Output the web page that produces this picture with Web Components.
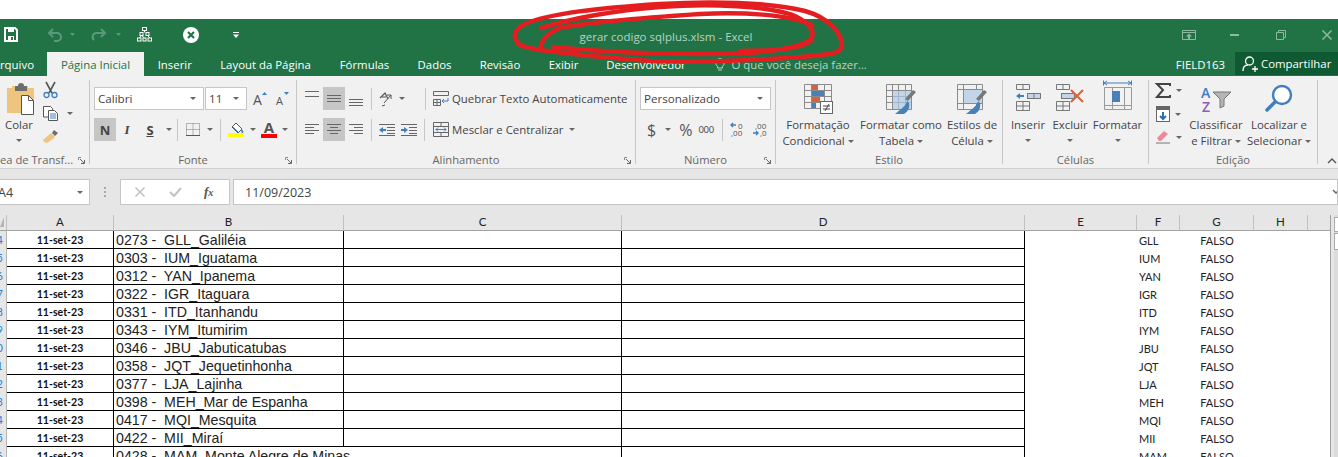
<!DOCTYPE html>
<html lang="pt">
<head>
<meta charset="utf-8">
<title>gerar codigo sqlplus.xlsm - Excel</title>
<style>
  html, body { margin: 0; height: 457px; overflow: hidden; background: #fff; font-family: "Open Sans", "Noto Sans", sans-serif; }
  svg { display: block; overflow: visible; }
  .row { display: flex; align-items: center; height: 23px; }
  .stack { display: flex; flex-direction: column; }
  .txt { font-size: 11.4px; color: #444; white-space: nowrap; }
</style>
</head>
<body>

<excel-titlebar title-text="gerar codigo sqlplus.xlsm - Excel">
  <svg slot="left" width="14" height="15" viewBox="0 0 14 15" style="margin-left:4px"><path d="M1 1h10l2 2v11H1z" fill="none" stroke="#fff" stroke-width="2"/><rect x="4" y="1" width="6" height="4" fill="#fff"/><rect x="4" y="9" width="6" height="5" fill="#fff"/><rect x="7" y="10" width="2" height="3" fill="#217346"/></svg>
  <svg slot="left" width="16" height="14" viewBox="0 0 16 14" style="margin-left:29px"><path d="M6 1L2 5l4 4M2 5h8a4 4 0 0 1 0 8H7" fill="none" stroke="#5b9a79" stroke-width="2"/></svg>
  <svg slot="left" width="5" height="3" viewBox="0 0 5 3" style="margin-left:7px"><path d="M0 0h5L2.500 3z" fill="#5b9a79"/></svg>
  <svg slot="left" width="15" height="13" viewBox="0 0 15 13" style="margin-left:17px"><path d="M9 1l4 4-4 4M13 5H5a4 4 0 0 0-3 7" fill="none" stroke="#5b9a79" stroke-width="2"/></svg>
  <svg slot="left" width="5" height="3" viewBox="0 0 5 3" style="margin-left:9px"><path d="M0 0h5L2.500 3z" fill="#5b9a79"/></svg>
  <svg slot="left" width="15" height="15" viewBox="0 0 15 15" style="margin-left:16px"><g fill="none" stroke="#fff"><rect x="5.500" y="0.500" width="4" height="3"/><rect x="3" y="5.500" width="3" height="3"/><rect x="9" y="5.500" width="3" height="3"/><rect x="0.500" y="11" width="3.500" height="3"/><rect x="6" y="11" width="3" height="3"/><rect x="11" y="11" width="3.500" height="3"/><path d="M7.500 3.500v2M4.500 8.500L2.500 11M4.500 8.500l3 2.500M10.500 8.500L13 11"/></g></svg>
  <svg slot="left" width="16" height="16" viewBox="0 0 16 16" style="margin-left:31px"><circle cx="8" cy="8" r="8" fill="#fff"/><path d="M5 5l6 6M11 5l-6 6" stroke="#217346" stroke-width="2.200"/></svg>
  <svg slot="left" width="6" height="6" viewBox="0 0 6 6" style="margin-left:34px"><path d="M0 0h6v1H0zM0 2.500h6L3 6z" fill="#fff"/></svg>

  <svg slot="right" width="14" height="10" viewBox="0 0 14 10" style="margin-left:0"><path d="M.5.500h13v9H.5zM.5 2.500h13" fill="none" stroke="#8fb8a2"/><path d="M7 3.500l3 3H8v2.500H6V6.500H4z" fill="#8fb8a2"/></svg>
  <svg slot="right" width="9" height="2" viewBox="0 0 9 2" style="margin-left:34px"><rect width="9" height="2" fill="#8fb8a2"/></svg>
  <svg slot="right" width="10" height="10" viewBox="0 0 10 10" style="margin-left:37px"><path d="M.5 2.500h7v7h-7zM2.500 2.500v-2h7v7h-2" fill="none" stroke="#8fb8a2"/></svg>
  <svg slot="right" width="10" height="10" viewBox="0 0 10 10" style="margin-left:36px"><path d="M.5.500l9 9M9.500.500l-9 9" stroke="#8fb8a2" stroke-width="1.500"/></svg>
</excel-titlebar>

<excel-tabs></excel-tabs>

<excel-ribbon>
  <!-- Area de transferencia -->
  <ribbon-group label="Área de Transf..." width="90" launcher="1" clip-label="1">
    <div class="row" style="height:71px;align-items:flex-start">
      <big-button width="38" label="Colar" caret="1">
        <svg width="30" height="31" viewBox="0 0 30 31" style="margin:4px 0 0 4px"><path d="M1 4h5V2h16v2h5a1 1 0 0 1 1 1v24H1z" fill="#edc57e"/><path d="M12 2a3 3 0 0 1 6 0h3v5H9V2z" fill="#6d6d6d"/><path d="M15.500 11.500h7l5 5v14h-12z" fill="#fff" stroke="#555"/><path d="M22.500 11.500v5h5" fill="none" stroke="#555"/></svg>
      </big-button>
      <div class="stack" style="gap:8px;padding-top:2px;margin-left:5px">
        <svg width="15" height="16" viewBox="0 0 15 16"><path d="M3 0l6 11M12 0L6 11" stroke="#555" stroke-width="1.600"/><circle cx="3.500" cy="13" r="2.500" fill="none" stroke="#3f7fbf" stroke-width="1.300"/><circle cx="11.500" cy="13" r="2.500" fill="none" stroke="#3f7fbf" stroke-width="1.300"/></svg>
        <div class="row" style="height:15px">
          <svg width="16" height="15" viewBox="0 0 16 15"><path d="M.5.500h7l2 2V11H.5z" fill="#fff" stroke="#555"/><path d="M5.500 4.500h6l3 3v7h-9z" fill="#fff" stroke="#555"/><path d="M7 8h6M7 10h6M7 12h6" stroke="#3f7fbf"/></svg>
          <drop-caret style="margin-left:8px"></drop-caret>
        </div>
        <svg width="17" height="15" viewBox="0 0 17 15" style="margin-left:0"><path d="M11 1l4 3-3 3-3-3z" fill="#6d6d6d"/><path d="M8 4l4 4-2 2-6 4-3-1-1-2z" fill="#edc57e"/></svg>
      </div>
    </div>
  </ribbon-group>

  <!-- Fonte -->
  <ribbon-group label="Fonte" width="207" launcher="1" pad-left="4">
    <div class="row">
      <font-combo width="110" value="Calibri"></font-combo>
      <font-combo width="42" value="11" style="margin-left:1px"></font-combo>
      <tool-button width="14" style="margin-left:6px"><svg width="14" height="14" viewBox="0 0 14 14"><text x="0" y="13" font-size="14" font-family="Open Sans" fill="#555">A</text><path d="M9 3l2.500-3L14 3z" fill="#3f7fbf"/></svg></tool-button>
      <tool-button width="13" style="margin-left:9px"><svg width="13" height="13" viewBox="0 0 13 13"><text x="0" y="13" font-size="11" font-family="Open Sans" fill="#555">A</text><path d="M8 0h5l-2.500 3z" fill="#3f7fbf"/></svg></tool-button>
    </div>
    <div class="row" style="margin-top:8px">
      <tool-button width="22" active="1"><b style="font:bold 13px 'Open Sans';color:#444">N</b></tool-button>
      <tool-button width="22" style="margin-left:0"><i style="font:italic bold 13px 'Liberation Serif';color:#444">I</i></tool-button>
      <tool-button width="22" style="margin-left:1px"><b style="font:bold 13px 'Open Sans';color:#444;text-decoration:underline">S</b></tool-button>
      <drop-caret style="margin-left:5px"></drop-caret>
      <tool-sep style="margin-left:5px"></tool-sep>
      <svg width="14" height="13" viewBox="0 0 14 13" style="margin-left:8px"><path d="M.5.500h13v12H.5zM.5 6.500h13M7 .500v12" fill="none" stroke="#777" stroke-dasharray="1 1"/><path d="M0 12.500h14" stroke="#555"/></svg>
      <drop-caret style="margin-left:7px"></drop-caret>
      <tool-sep style="margin-left:7px"></tool-sep>
      <svg width="17" height="15" viewBox="0 0 17 15" style="margin-left:7px"><path d="M8 1l6 6-4 4-6-6z" fill="#fff" stroke="#555"/><path d="M13 7c2 1 3 3 2 4s-2-1-2-4z" fill="#3f7fbf"/><path d="M5 5l6 6" stroke="#3f7fbf"/><rect x="0" y="11" width="16" height="4" fill="#ffff00"/></svg>
      <drop-caret style="margin-left:5px"></drop-caret>
      <div class="stack" style="margin-left:5px;width:16px;align-items:center;height:16px;justify-content:space-between">
        <span style="font:bold 15px/11px 'Open Sans';color:#555;height:11px">A</span>
        <span style="display:block;width:16px;height:4px;background:#f00"></span>
      </div>
      <drop-caret style="margin-left:5px"></drop-caret>
    </div>
  </ribbon-group>

  <!-- Alinhamento -->
  <ribbon-group label="Alinhamento" width="339" launcher="1" pad-left="4">
    <div class="row">
      <tool-button width="22"><svg width="14" height="18" viewBox="0 0 14 18"><path d="M0 1.500h14M0 6.500h14" stroke="#666"/></svg></tool-button>
      <tool-button width="22" active="1"><svg width="14" height="9" viewBox="0 0 14 9"><path d="M0 1.500h14M0 4.500h14M0 7.500h14" stroke="#666"/></svg></tool-button>
      <tool-button width="22"><svg width="14" height="18" viewBox="0 0 14 18"><path d="M0 9.500h14M0 12.500h14M0 15.500h14" stroke="#666"/></svg></tool-button>
      <tool-sep style="margin-left:4px"></tool-sep>
      <svg width="16" height="16" viewBox="0 0 16 16" style="margin-left:7px"><path d="M1 7l5-5 3 6M3 6l4 0" fill="none" stroke="#555" stroke-width="1.200"/><path d="M5 12l7-8M12 4v4M12 4H8M3 15l3-1" fill="none" stroke="#555"/></svg>
      <drop-caret style="margin-left:4px"></drop-caret>
      <tool-sep style="margin-left:20px"></tool-sep>
      <svg width="16" height="15" viewBox="0 0 16 15" style="margin-left:7px"><path d="M.5 .5h15v4H.5zM.5 8.500h7v6h-7zM.5 11.500h7M4 8.500v6" fill="none" stroke="#666"/><path d="M15 7v3H9m2-2l-2 2 2 2" fill="none" stroke="#3f7fbf"/></svg>
      <span class="txt" style="margin-left:3px">Quebrar Texto Automaticamente</span>
    </div>
    <div class="row" style="margin-top:8px">
      <tool-button width="22"><svg width="14" height="11" viewBox="0 0 14 11"><path d="M0 .5h14M0 3.500h9M0 6.500h14M0 9.500h9" stroke="#666"/></svg></tool-button>
      <tool-button width="22" active="1"><svg width="14" height="11" viewBox="0 0 14 11"><path d="M0 .5h14M3 3.500h8M0 6.500h14M3 9.500h8" stroke="#666"/></svg></tool-button>
      <tool-button width="22"><svg width="14" height="11" viewBox="0 0 14 11"><path d="M0 .5h14M5 3.500h9M0 6.500h14M5 9.500h9" stroke="#666"/></svg></tool-button>
      <tool-sep style="margin-left:4px"></tool-sep>
      <svg width="16" height="12" viewBox="0 0 16 12" style="margin-left:7px"><path d="M0 .5h16M8 3.500h8M8 6.500h8M0 11.500h16M8 9.500h8" stroke="#666" stroke-width="1"/><path d="M0 6l4-3v2h3v2H4v2z" fill="#3f7fbf"/></svg>
      <svg width="16" height="12" viewBox="0 0 16 12" style="margin-left:6px"><path d="M0 .5h16M8 3.500h8M8 6.500h8M0 11.500h16M8 9.500h8" stroke="#666"/><path d="M7 6L3 3v2H0v2h3v2z" fill="#3f7fbf"/></svg>
      <tool-sep style="margin-left:7px"></tool-sep>
      <svg width="16" height="15" viewBox="0 0 16 15" style="margin-left:8px"><path d="M.5.500h15v14H.5zM.5 4.500h15M.5 10.500h15M8 .500v4M8 10.500v4" fill="none" stroke="#666"/><path d="M3 7.500h10M3 7.500l2-2M3 7.500l2 2M13 7.500l-2-2M13 7.500l-2 2" fill="none" stroke="#3f7fbf"/></svg>
      <span class="txt" style="margin-left:3px">Mesclar e Centralizar</span>
      <drop-caret style="margin-left:6px"></drop-caret>
    </div>
  </ribbon-group>

  <!-- Numero -->
  <ribbon-group label="Número" width="140" launcher="1" pad-left="4">
    <div class="row"><font-combo width="131" value="Personalizado"></font-combo></div>
    <div class="row" style="margin-top:8px">
      <span style="font:16px 'Open Sans';color:#555;margin-left:7px">$</span>
      <drop-caret style="margin-left:9px"></drop-caret>
      <span style="font:16px 'Open Sans';color:#555;margin-left:8px">%</span>
      <span style="font:9.500px 'Open Sans';color:#444;margin-left:6px;letter-spacing:-.2px">000</span>
      <tool-sep style="margin-left:8px"></tool-sep>
      <svg width="15" height="15" viewBox="0 0 15 15" style="margin-left:7px"><path d="M6 3H1m2-2L1 3l2 2" fill="none" stroke="#3f7fbf" stroke-width="1.400"/><text x="8" y="7" font-size="8" font-family="Open Sans" fill="#555">0</text><text x="1" y="14" font-size="8" font-family="Open Sans" fill="#555">,00</text></svg>
      <svg width="15" height="15" viewBox="0 0 15 15" style="margin-left:7px"><text x="3" y="7" font-size="8" font-family="Open Sans" fill="#555">,00</text><path d="M1 11h5m-2-2l2 2-2 2" fill="none" stroke="#3f7fbf" stroke-width="1.400"/><text x="8" y="14" font-size="8" font-family="Open Sans" fill="#555">,0</text></svg>
    </div>
  </ribbon-group>

  <!-- Estilo -->
  <ribbon-group label="Estilo" width="227">
    <div class="row" style="height:71px;align-items:flex-start">
      <big-button width="84" lines="Formatação|Condicional" line-caret="1">
        <svg width="29" height="31" viewBox="0 0 29 31" style="margin-top:4px"><path d="M.5.500h27v24H.5zM.5 6.500h27M.5 12.500h27M.5 18.500h27M7.500.500v24M20.500.500v24" fill="none" stroke="#8b8b8b"/><rect x="8" y="1" width="6" height="5" fill="#d9613b"/><rect x="8" y="7" width="12" height="5" fill="#4a80b8"/><rect x="8" y="13" width="8" height="5" fill="#d9613b"/><rect x="8" y="19" width="4" height="5" fill="#4a80b8"/><rect x="16.500" y="17.500" width="12" height="12" fill="#fff" stroke="#666"/><path d="M19 22h7M19 25h7M25 20l-4 7" stroke="#444"/></svg>
      </big-button>
      <big-button width="82" lines="Formatar como|Tabela" line-caret="1">
        <svg width="30" height="31" viewBox="0 0 30 31" style="margin-top:4px"><path d="M.5.500h25v25H.5zM.5 6.500h25M.5 12.500h25M.5 18.500h25M6.500.500v25M12.500.500v25M19.500.500v25" fill="none" stroke="#8b8b8b"/><rect x="7" y="7" width="18" height="18" fill="#c2d5e8"/><path d="M7 12.500h18M7 18.500h18M12.500 7v18M19.500 7v18" stroke="#9fb6cc"/><path d="M30 8l-8 9-3-2 8-9z" fill="#777"/><path d="M21 17c-1 5-6 8-12 13h9c4-2 6-7 5-11z" fill="#4a80b8"/></svg>
      </big-button>
      <big-button width="60" lines="Estilos de|Célula" line-caret="1">
        <svg width="30" height="31" viewBox="0 0 30 31" style="margin-top:4px"><path d="M.5.500h25v25H.5zM.5 5.500h25M6.500.500v25M19.500.500v25M.5 19.500h25" fill="none" stroke="#8b8b8b"/><rect x="7" y="6" width="18" height="13" fill="#c2d5e8"/><path d="M30 8l-8 9-3-2 8-9z" fill="#777"/><path d="M21 17c-1 5-6 8-12 13h9c4-2 6-7 5-11z" fill="#4a80b8"/></svg>
      </big-button>
    </div>
  </ribbon-group>

  <!-- Celulas -->
  <ribbon-group label="Células" width="146">
    <div class="row" style="height:71px;align-items:flex-start">
      <big-button width="50" label="Inserir" caret="1">
        <svg width="26" height="27" viewBox="0 0 26 27" style="margin:4px 0 0 0"><path d="M1.500 .5h13v5h-13zM8 .5v5M1.500 17.500h13v9h-13zM1.500 22h13M8 17.500v9" fill="none" stroke="#777"/><rect x="12.500" y="9.500" width="13" height="5" fill="#c2d5e8" stroke="#777"/><path d="M19 9.500v5" stroke="#777"/><path d="M1 12l4-3v2h4v2H5v2z" fill="#3f7fbf"/></svg>
      </big-button>
      <big-button width="34" label="Excluir" caret="1">
        <svg width="30" height="27" viewBox="0 0 30 27" style="margin:4px 0 0 0"><path d="M1.500 .5h13v5h-13zM8 .5v5M1.500 17.500h13v9h-13zM1.500 22h13M8 17.500v9" fill="none" stroke="#777"/><rect x="6.500" y="9.500" width="13" height="5" fill="#c2d5e8" stroke="#777"/><path d="M16 6l12 12M28 6L16 18" stroke="#d9613b" stroke-width="2"/></svg>
      </big-button>
      <big-button width="61" label="Formatar" caret="1" style="margin-left:0">
        <svg width="29" height="33" viewBox="0 0 29 33" style="margin:0"><path d="M1 3h27M1 3l3-2M1 3l3 2M28 3l-3-2M28 3l-3 2M.5.500v5M28.500.500v5" fill="none" stroke="#3f7fbf"/><path d="M1.500 7.500h27v22h-27zM1.500 25.500h27M9.500 7.500v22M21.500 7.500v22" fill="none" stroke="#999"/><rect x="9" y="11" width="8" height="11" fill="#4a80b8"/></svg>
      </big-button>
    </div>
  </ribbon-group>

  <!-- Edicao -->
  <ribbon-group label="Edição" width="169">
    <div class="row" style="height:71px;align-items:flex-start">
      <div class="stack" style="gap:8px;padding:3px 0 0 7px;width:36px;box-sizing:border-box;flex:none">
        <div class="row" style="height:15px">
          <svg width="15" height="15" viewBox="0 0 15 15"><path d="M14 3V1H1l6 6-6 7h13v-2" fill="none" stroke="#444" stroke-width="2"/></svg>
          <drop-caret style="margin-left:5px"></drop-caret>
        </div>
        <div class="row" style="height:16px">
          <svg width="14" height="16" viewBox="0 0 14 16"><rect x=".5" y=".5" width="13" height="15" fill="#fff" stroke="#666"/><rect width="14" height="4" fill="#666"/><path d="M7 6v7M4 10l3 3 3-3" fill="none" stroke="#2a6db5" stroke-width="2"/></svg>
          <drop-caret style="margin-left:5px"></drop-caret>
        </div>
        <div class="row" style="height:14px">
          <svg width="14" height="14" viewBox="0 0 14 14"><path d="M1 8l7-7 4 3-7 7H3z" fill="#ec8a9c"/><path d="M0 13h14" stroke="#777"/></svg>
          <drop-caret style="margin-left:6px"></drop-caret>
        </div>
      </div>
      <big-button width="62" lines="Classificar|e Filtrar" line-caret="1">
        <svg width="31" height="27" viewBox="0 0 31 27" style="margin-top:5px"><text x="0" y="13" font-size="14" font-family="Open Sans" font-weight="600" fill="#3f7fbf">A</text><text x="1" y="27" font-size="14" font-family="Open Sans" font-weight="600" fill="#8c5fb5">Z</text><path d="M12 7h18l-7 7v7l-4 2v-9z" fill="#b5b5b5" stroke="#777"/></svg>
      </big-button>
      <big-button width="64" lines="Localizar e|Selecionar" line-caret="1">
        <svg width="28" height="28" viewBox="0 0 28 28" style="margin-top:4px"><circle cx="17" cy="11" r="9" fill="#fff" stroke="#3f7fbf" stroke-width="2.400"/><path d="M10 18L2 26" stroke="#3f7fbf" stroke-width="3.500" stroke-linecap="round"/></svg>
      </big-button>
    </div>
  </ribbon-group>
</excel-ribbon>

<excel-formula name-box="A4" value="11/09/2023"></excel-formula>
<excel-sheet></excel-sheet>
<red-scribble></red-scribble>

<script>
class ExcelTitlebar extends HTMLElement {
  constructor() {
    super();
    this.attachShadow({mode: 'open'});
    this.shadowRoot.innerHTML = `
      <style>
        :host { display: grid; grid-template-columns: 555px 220px 1fr; height: 33px; margin-top: 19px; background: #217346; align-items: center; }
        .side { display: flex; align-items: center; padding-bottom: 2px; }
        .title { font-size: 11.5px; color: #b7d3c3; text-align: center; white-space: nowrap; padding-top: 2px; transform: translateX(1px); }
        .right { padding-left: 407px; }
      </style>
      <div class="side"><slot name="left"></slot></div>
      <div class="title"></div>
      <div class="side right"><slot name="right"></slot></div>`;
    this.shadowRoot.querySelector('.title').textContent = this.getAttribute('title-text');
  }
}

const TABS = [['Arquivo', 47], ['Página Inicial', 97, true], ['Inserir', 61.5], ['Layout da Página', 120], ['Fórmulas', 78], ['Dados', 62], ['Revisão', 69], ['Exibir', 58], ['Desenvolvedor', 107]];

class ExcelTabs extends HTMLElement {
  constructor() {
    super();
    this.attachShadow({mode: 'open'});
    this.shadowRoot.innerHTML = `
      <style>
        :host { display: flex; height: 24px; background: #217346; font-size: 11.4px; color: #fff; white-space: nowrap; }
        .tab { display: flex; align-items: center; justify-content: center; flex: none; padding-top: 1px; box-sizing: border-box; }
        .tab.first { justify-content: flex-end; padding-right: 13px; }
        .tab.on { background: #f1f1f1; color: #217346; }
        .tell { display: flex; align-items: center; gap: 7px; margin-left: 15px; color: #b7d3c3; flex: none; width: 450px; }
        .user { margin-left: auto; display: flex; align-items: center; padding-right: 10px; }
        .share { display: flex; align-items: center; gap: 3px; width: 103px; height: 23px; padding-left: 7px; box-sizing: border-box; background: #0f5a32; flex: none; }
      </style>
      <div class="tabs" style="display:contents"></div>
      <div class="tell">
        <svg width="10" height="13" viewBox="0 0 10 13"><path d="M5 .5a4.500 4.500 0 0 1 2.500 8V10h-5V8.500A4.500 4.500 0 0 1 5 .5zM3 12h4" fill="none" stroke="#b7d3c3"/></svg>
        <span>O que você deseja fazer...</span>
      </div>
      <div class="user">FIELD163</div>
      <div class="share">
        <svg width="16" height="16" viewBox="0 0 16 16"><circle cx="7.500" cy="5" r="4" fill="none" stroke="#fff" stroke-width="1.300"/><path d="M1 15c0-4 2-6 5-6M10 13h6M13 10v6" fill="none" stroke="#fff" stroke-width="1.300"/></svg>
        <span>Compartilhar</span>
      </div>`;
    const box = this.shadowRoot.querySelector('.tabs');
    TABS.forEach(([name, w, on], i) => {
      const t = document.createElement('div');
      t.className = 'tab' + (on ? ' on' : '') + (i === 0 ? ' first' : '');
      t.style.width = w + 'px';
      t.textContent = name;
      box.appendChild(t);
    });
  }
}

class ExcelRibbon extends HTMLElement {
  constructor() {
    super();
    this.attachShadow({mode: 'open'});
    this.shadowRoot.innerHTML = `
      <style>
        :host { display: flex; height: 93px; padding-top: 4px; box-sizing: border-box; background: #f1f1f1; border-bottom: 1px solid #d2d2d2; position: relative; }
        .up { margin: 78px 0 0 9px; }
      </style>
      <slot></slot>
      <svg class="up" width="10" height="6" viewBox="0 0 10 6"><path d="M1 5l4-4 4 4" fill="none" stroke="#555" stroke-width="1.400"/></svg>`;
  }
}

class RibbonGroup extends HTMLElement {
  constructor() {
    super();
    this.attachShadow({mode: 'open'});
    const pad = this.getAttribute('pad-left');
    const launcher = this.hasAttribute('launcher');
    this.shadowRoot.innerHTML = `
      <style>
        :host { display: flex; flex-direction: column; flex: none; height: 84px; box-sizing: border-box; border-right: 1px solid #c6c6c6; width: ${this.getAttribute('width')}px; }
        .body { flex: none; height: 71px; padding-top: ${pad ? 7 : 0}px; padding-left: ${pad || 0}px; box-sizing: border-box; }
        .foot { flex: none; position: relative; height: 17px; line-height: 17px; font-size: 11.2px; color: #666; text-align: center; white-space: nowrap; overflow: visible; }
        .foot svg { position: absolute; right: 4px; top: 6px; }
      </style>
      <div class="body"><slot></slot></div>
      <div class="foot"><span></span>${launcher ? '<svg width="7" height="7" viewBox="0 0 7 7"><path d="M.5 3V.5H3" fill="none" stroke="#888"/><path d="M2 2l4 4M6.500 3v3.500H3" fill="none" stroke="#666"/></svg>' : ''}</div>`;
    const label = this.shadowRoot.querySelector('.foot span');
    label.textContent = this.getAttribute('label');
    if (this.hasAttribute('clip-label')) {
      this.shadowRoot.querySelector('.foot').style.textAlign = 'left';
      label.textContent = 'ea de Transf...';
    }
  }
}

class BigButton extends HTMLElement {
  constructor() {
    super();
    this.attachShadow({mode: 'open'});
    const lines = (this.getAttribute('lines') || this.getAttribute('label')).split('|');
    const under = this.hasAttribute('caret') ? '<div class="c"><drop-caret></drop-caret></div>' : '';
    const textLines = lines.map((l, i) => `<div class="l">${l}${(i === lines.length - 1 && this.hasAttribute('line-caret')) ? '<drop-caret class="lc"></drop-caret>' : ''}</div>`).join('');
    this.shadowRoot.innerHTML = `
      <style>
        :host { display: flex; flex-direction: column; align-items: center; flex: none; width: ${this.getAttribute('width')}px; }
        .i { height: 37px; display: flex; justify-content: center; }
        .l { font-size: 11.4px; line-height: 16px; color: #444; white-space: nowrap; display: flex; align-items: center; }
        .lc { margin-left: 3px; }
        .c { height: 15px; display: flex; align-items: center; }
      </style>
      <div class="i"><slot></slot></div>
      ${textLines}${under}`;
  }
}

class ToolButton extends HTMLElement {
  constructor() {
    super();
    this.attachShadow({mode: 'open'});
    this.shadowRoot.innerHTML = `
      <style>
        :host { display: flex; align-items: center; justify-content: center; flex: none; height: 23px; width: ${this.getAttribute('width')}px; background: ${this.hasAttribute('active') ? '#c6c6c6' : 'transparent'}; }
      </style>
      <slot></slot>`;
  }
}

class ToolSep extends HTMLElement {
  constructor() {
    super();
    this.attachShadow({mode: 'open'});
    this.shadowRoot.innerHTML = `<style>:host { display: block; flex: none; width: 1px; height: 22px; background: #c6c6c6; }</style>`;
  }
}

class DropCaret extends HTMLElement {
  constructor() {
    super();
    this.attachShadow({mode: 'open'});
    this.shadowRoot.innerHTML = `<style>:host { display: block; flex: none; width: 0; height: 0; border: 3px solid transparent; border-top: 3px solid #666; border-bottom: 0; }</style>`;
  }
}

class FontCombo extends HTMLElement {
  constructor() {
    super();
    this.attachShadow({mode: 'open'});
    this.shadowRoot.innerHTML = `
      <style>
        :host { display: flex; align-items: center; justify-content: space-between; flex: none; box-sizing: border-box; height: 23px; width: ${this.getAttribute('width')}px; padding: 0 7px 0 3px; background: #fff; border: 1px solid #c6c6c6; font-size: 11.6px; color: #444; }
      </style>
      <span></span><drop-caret></drop-caret>`;
    this.shadowRoot.querySelector('span').textContent = this.getAttribute('value');
  }
}

class ExcelFormula extends HTMLElement {
  constructor() {
    super();
    this.attachShadow({mode: 'open'});
    this.shadowRoot.innerHTML = `
      <style>
        :host { display: flex; height: 46px; padding: 10px 0; box-sizing: border-box; background: #e6e6e6; font-size: 12.5px; color: #444; }
        .box { background: #fff; border: 1px solid #c6c6c6; box-sizing: border-box; height: 26px; display: flex; align-items: center; flex: none; }
        .name { width: 91px; margin-left: -1px; overflow: hidden; justify-content: space-between; padding-right: 6px; }
        .name span { margin-left: -2px; }
        .dots { width: 30px; display: flex; justify-content: center; align-items: center; flex: none; }
        .btns { width: 110px; }
        .val { margin-left: 3px; flex: 1; padding-left: 11px; justify-content: space-between; padding-right: 0; overflow: hidden; }
      </style>
      <div class="box name"><span></span><drop-caret></drop-caret></div>
      <div class="dots"><svg width="2" height="10" viewBox="0 0 2 10"><path d="M0 0h2v2H0zM0 4h2v2H0zM0 8h2v2H0z" fill="#aaa"/></svg></div>
      <div class="box btns">
        <svg width="10" height="10" viewBox="0 0 10 10" style="margin-left:14px"><path d="M.5.500l9 9M9.500.500l-9 9" stroke="#c2c2c2" stroke-width="1.500"/></svg>
        <svg width="13" height="10" viewBox="0 0 13 10" style="margin-left:24px"><path d="M1 5l4 4 7-8" fill="none" stroke="#c2c2c2" stroke-width="2"/></svg>
        <span style="margin-left:22px;font:italic bold 13px 'Liberation Serif';color:#555">f<span style="font-size:10px">x</span></span>
      </div>
      <div class="box val"><span class="v"></span><svg width="8" height="6" viewBox="0 0 8 6" style="margin-right:-3px"><path d="M1 1l3 3 3-3" fill="none" stroke="#666" stroke-width="1.500"/></svg></div>`;
    this.shadowRoot.querySelector('.name span').textContent = this.getAttribute('name-box');
    this.shadowRoot.querySelector('.v').textContent = this.getAttribute('value');
  }
}

const COLS = [['A', 107], ['B', 230], ['C', 278], ['D', 403], ['E', 112], ['F', 43], ['G', 74], ['H', 54]];
const ROWS = [
  ['0273', 'GLL', 'Galiléia'], ['0303', 'IUM', 'Iguatama'], ['0312', 'YAN', 'Ipanema'],
  ['0322', 'IGR', 'Itaguara'], ['0331', 'ITD', 'Itanhandu'], ['0343', 'IYM', 'Itumirim'],
  ['0346', 'JBU', 'Jabuticatubas'], ['0358', 'JQT', 'Jequetinhonha'], ['0377', 'LJA', 'Lajinha'],
  ['0398', 'MEH', 'Mar de Espanha'], ['0417', 'MQI', 'Mesquita'], ['0422', 'MII', 'Miraí'],
  ['0428', 'MAM', 'Monte Alegre de Minas']
];

class ExcelSheet extends HTMLElement {
  constructor() {
    super();
    this.attachShadow({mode: 'open'});
    const tracks = '7px ' + COLS.map(c => c[1] + 'px').join(' ') + ' 22px';
    let html = '<div class="h corner"><svg width="4" height="10" viewBox="0 0 4 10"><path d="M4 0v10H0z" fill="#b5b5b5"/></svg></div>';
    COLS.forEach(c => { html += `<div class="h">${c[0]}</div>`; });
    html += '<div class="h end"></div>';
    ROWS.forEach((r, i) => {
      const last = i === ROWS.length - 1;
      html += `<div class="rh">${i + 4}</div>`;
      html += '<div class="c a">11-set-23</div>';
      html += `<div class="c b${last ? ' open' : ''}">${r[0]} -  ${r[1]}_${r[2]}</div>`;
      html += '<div class="c"></div><div class="c"></div>';
      html += '<div class="e"></div>';
      html += `<div class="e f">${r[1]}</div><div class="e g">FALSO</div><div class="e"></div><div class="e"></div>`;
    });
    this.shadowRoot.innerHTML = `
      <style>
        :host { display: flex; background: #e6e6e6; }
        .grid { display: grid; grid-template-columns: ${tracks}; grid-auto-rows: 18px; grid-template-rows: 16px; flex: none; border-right: 1px solid #9f9f9f; }
        .h { background: #e6e6e6; border-bottom: 1px solid #a3a3a3; border-right: 1px solid #c0c0c0; box-sizing: border-box; font: 11.5px/14px "Lato", sans-serif; color: #222; text-align: center; }
        .corner { display: flex; align-items: center; padding-bottom: 1px; }
        .h.end { border-right: 0; }
        .rh { background: #e6e6e6; overflow: hidden; direction: rtl; font: 11px/18px "Lato", sans-serif; color: #2a7fd4; border-right: 1px solid #b5b5b5; box-sizing: border-box; padding-right: 3px; }
        .c, .e { background: #fff; box-sizing: border-box; white-space: pre; }
        .c { border-right: 1px solid #000; border-bottom: 1px solid #000; }
        .a { font: bold 10.6px/18px "Lato", sans-serif; color: #111; text-align: center; }
        .b { font: 14.2px/18px "Liberation Sans", sans-serif; color: #222; padding-left: 2px; }
        .b.open { border-right-color: transparent; overflow: visible; z-index: 1; }
        .e { font: 11px/20px "Lato", sans-serif; color: #222; }
        .f { padding-left: 2px; }
        .g { text-align: center; }
        .scroll { margin-left: 3px; flex: 1; background: #dcdcdc; display: flex; flex-direction: column; gap: 1px; align-items: stretch; padding-top: 2px; }
        .sb { box-sizing: border-box; border: 1px solid #ababab; border-right: 0; background: #fff; height: 15px; }
        .sb.t { height: 17px; background: #fff; }
      </style>
      <div class="grid">${html}</div>
      <div class="scroll"><div class="sb"></div><div class="sb t"></div></div>`;
  }
}

class RedScribble extends HTMLElement {
  constructor() {
    super();
    this.attachShadow({mode: 'open'});
    this.shadowRoot.innerHTML = `
      <style>
        :host { position: absolute; left: 0; top: 0; display: block; pointer-events: none; }
      </style>
      <svg width="1338" height="70" viewBox="0 0 1338 70" style="display:block">
        <g fill="none" stroke="#e41e20" stroke-width="4.500" stroke-linecap="round" stroke-linejoin="round">
          <path d="M520 45C512 38 513 30 525 24C550 13 600 8 660 4C710 1 770 2 805 11C830 18 842 34 842 46C842 54 825 55 800 57C760 60 700 63 650 61C610 58 570 54 540 50C530 48 524 47 520 45"/>
          <path d="M541 28C570 19 610 11 660 7C710 3 770 6 795 16C812 24 816 34 810 40C800 47 780 50 750 53C700 55 620 54 553 47"/>
          <path d="M540 50C541 40 548 33 560 28C590 22 640 18 700 14C740 12 790 14 812 25"/>
          <path d="M812 40C800 50 770 51 740 51"/>
        </g>
      </svg>`;
  }
}

customElements.define('excel-titlebar', ExcelTitlebar);
customElements.define('excel-tabs', ExcelTabs);
customElements.define('excel-ribbon', ExcelRibbon);
customElements.define('ribbon-group', RibbonGroup);
customElements.define('big-button', BigButton);
customElements.define('tool-button', ToolButton);
customElements.define('tool-sep', ToolSep);
customElements.define('drop-caret', DropCaret);
customElements.define('font-combo', FontCombo);
customElements.define('excel-formula', ExcelFormula);
customElements.define('excel-sheet', ExcelSheet);
customElements.define('red-scribble', RedScribble);
</script>
</body>
</html>
